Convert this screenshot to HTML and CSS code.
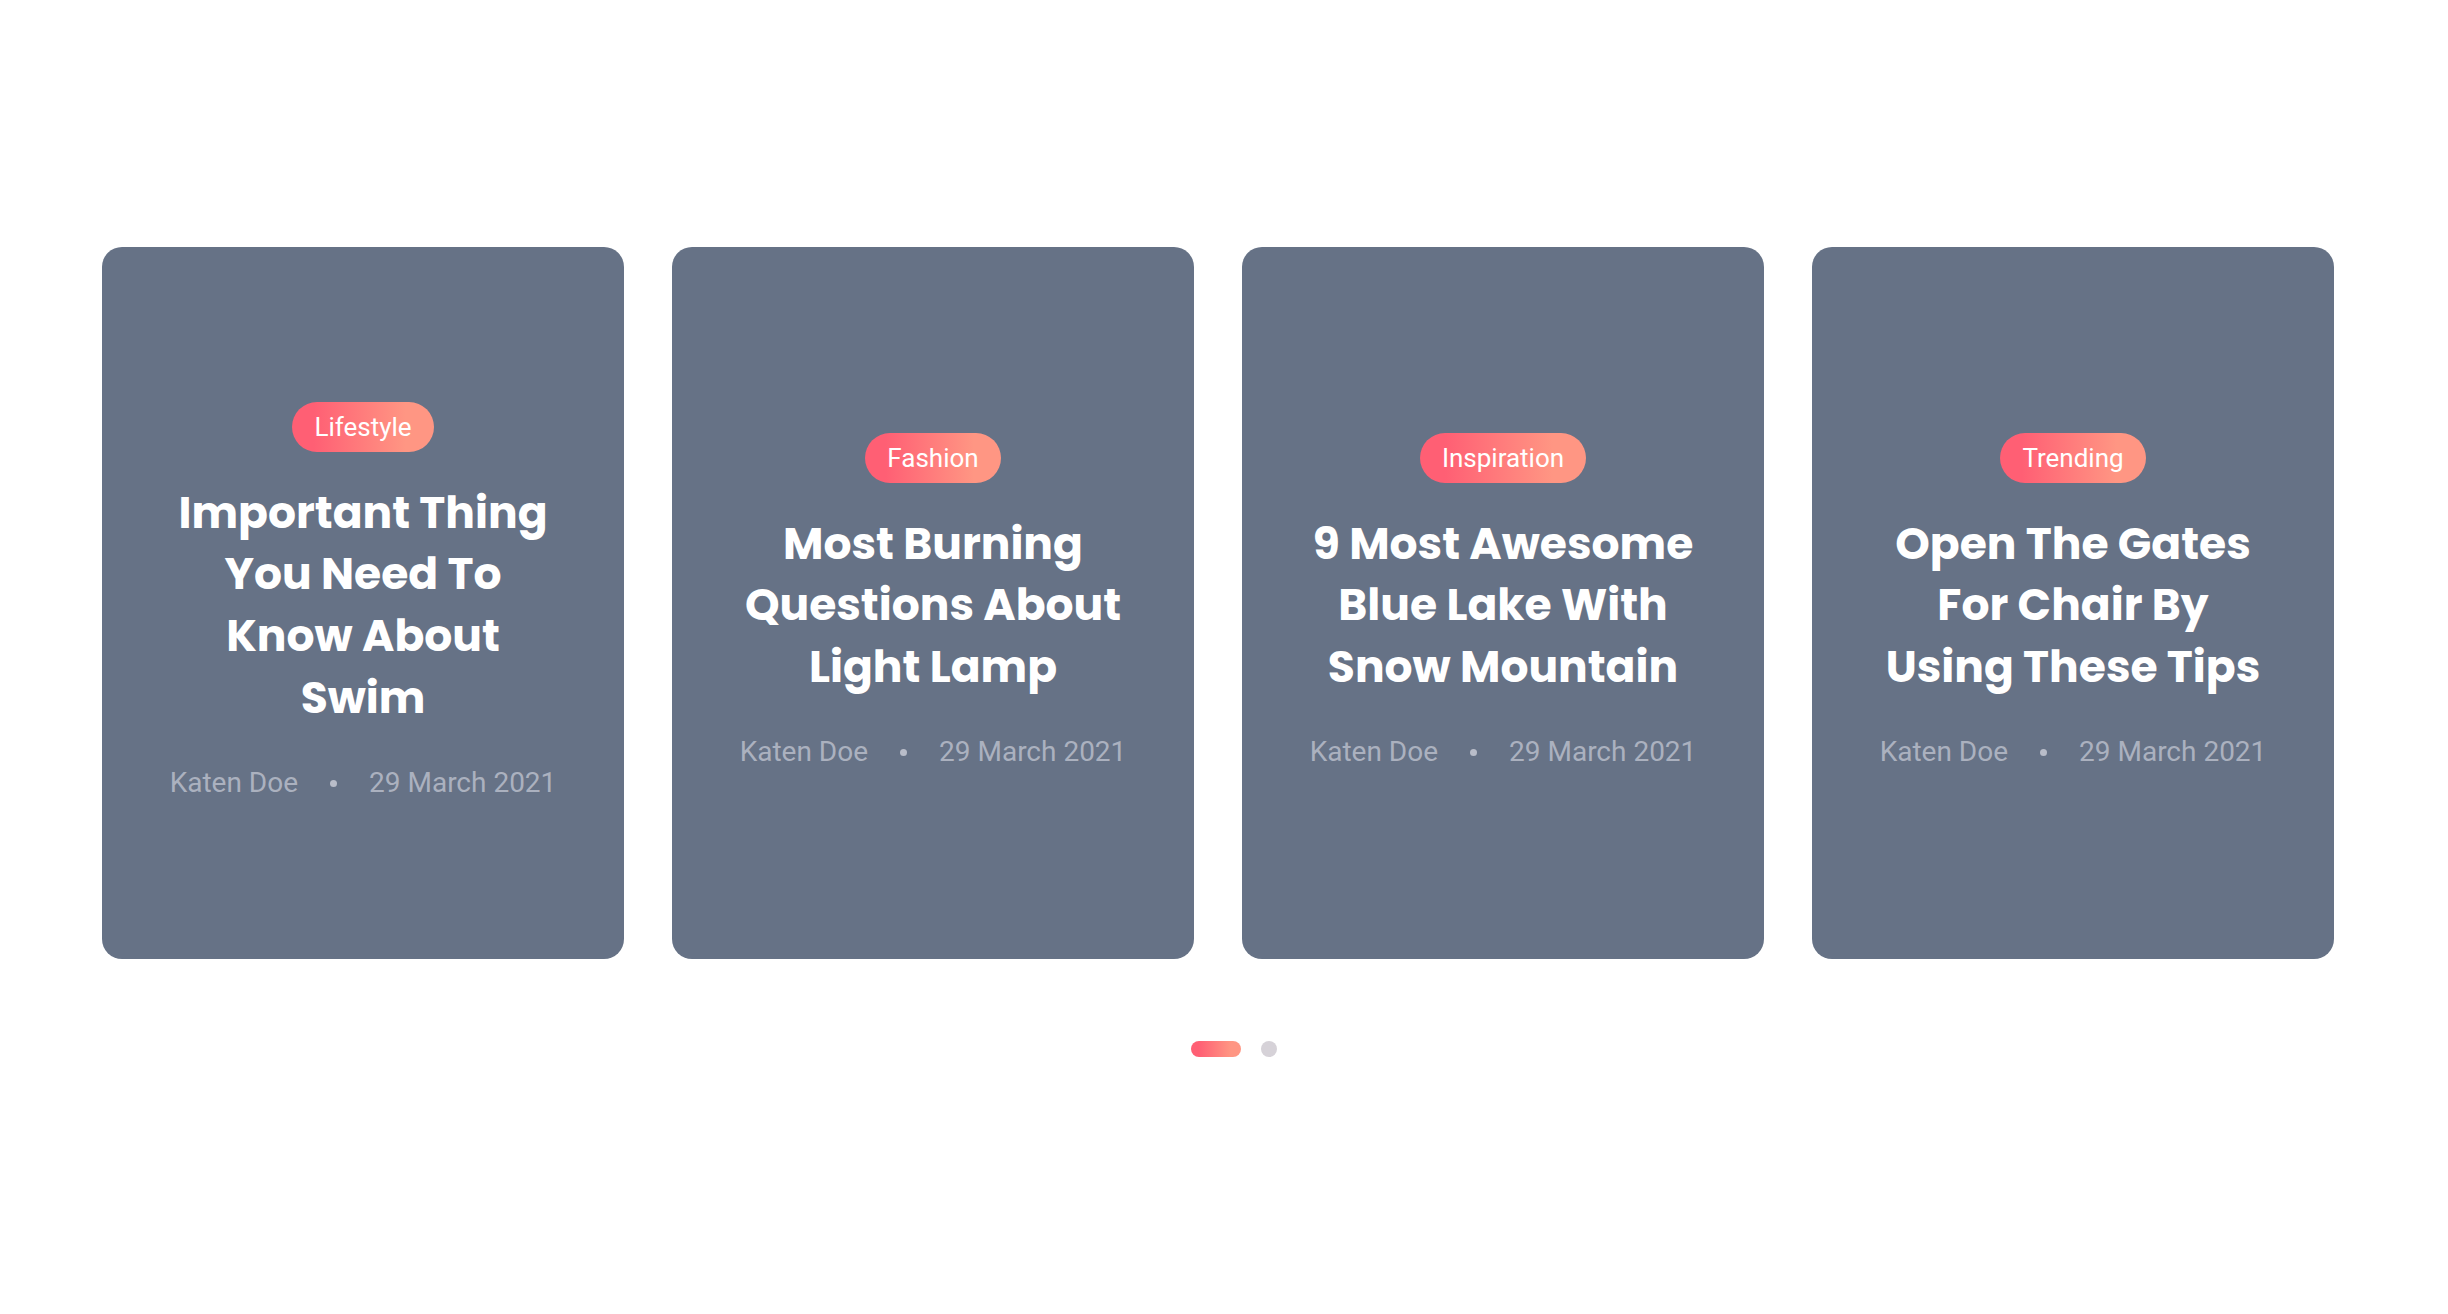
FILE: index.html
```html
<!DOCTYPE html>
<html lang="en">
<head>
<meta charset="utf-8">
<meta name="viewport" content="width=device-width, initial-scale=1">
<title>Featured posts</title>
<link rel="stylesheet" href="styles.css">
</head>
<body>
<main class="carousel">
  <div class="posts">
    <article class="card">
      <a class="tag" href="#lifestyle">Lifestyle</a>
      <h2 class="title"><a href="#swim">Important Thing You Need To Know About Swim</a></h2>
      <ul class="meta"><li><a href="#katen">Katen Doe</a></li><li>29 March 2021</li></ul>
    </article>
    <article class="card">
      <a class="tag" href="#fashion">Fashion</a>
      <h2 class="title"><a href="#lamp">Most Burning Questions About Light Lamp</a></h2>
      <ul class="meta"><li><a href="#katen">Katen Doe</a></li><li>29 March 2021</li></ul>
    </article>
    <article class="card">
      <a class="tag" href="#inspiration">Inspiration</a>
      <h2 class="title"><a href="#lake">9 Most Awesome Blue Lake With Snow Mountain</a></h2>
      <ul class="meta"><li><a href="#katen">Katen Doe</a></li><li>29 March 2021</li></ul>
    </article>
    <article class="card">
      <a class="tag" href="#trending">Trending</a>
      <h2 class="title"><a href="#chair">Open The Gates For Chair By Using These Tips</a></h2>
      <ul class="meta"><li><a href="#katen">Katen Doe</a></li><li>29 March 2021</li></ul>
    </article>
  </div>
  <nav class="dots" aria-label="Slides">
    <button class="dot dot-active" type="button" aria-label="Slide 1" aria-current="true"></button>
    <button class="dot" type="button" aria-label="Slide 2"></button>
  </nav>
</main>
</body>
</html>
```
FILE: styles.css
```css
* {
  box-sizing: border-box;
}

body {
  margin: 0;
  background: #fff;
  font-family: Roboto, sans-serif;
}

a {
  color: inherit;
  text-decoration: none;
}

.carousel {
  padding: 247px 114px 120px 102px;
}

.posts {
  display: grid;
  grid-template-columns: repeat(4, minmax(0, 1fr));
  gap: 48px;
}

.card {
  display: flex;
  flex-direction: column;
  align-items: center;
  justify-content: center;
  gap: 30px;
  min-height: 712px;
  padding: 60px;
  border-radius: 20px;
  background: #667286;
  color: #fff;
  text-align: center;
}

.tag {
  padding: 0 22px;
  border-radius: 25px;
  background: linear-gradient(to right, #ff5f74 15%, #ff9683 80%);
  font-size: 26px;
  line-height: 50px;
}

.title {
  margin: 0;
  font-family: Poppins, Inter, sans-serif;
  font-size: 44px;
  font-weight: 700;
  line-height: 1.4;
}

.meta {
  display: flex;
  align-items: center;
  margin: 0;
  padding: 4px 0 0;
  color: #abb1bf;
  font-size: 28px;
  line-height: 42px;
  list-style: none;
  white-space: nowrap;
}

.meta li {
  display: flex;
  align-items: center;
}

.meta li + li::before {
  content: "";
  width: 7px;
  height: 7px;
  margin: 0 32px;
  border-radius: 50%;
  background: #b9bdc9;
}

.dots {
  display: flex;
  justify-content: center;
  gap: 20px;
  margin-top: 82px;
  padding-left: 32px;
}

.dot {
  width: 16px;
  height: 16px;
  padding: 0;
  border: 0;
  border-radius: 8px;
  background: #d6d2d8;
  cursor: pointer;
}

.dot-active {
  width: 50px;
  background: linear-gradient(to right, #ff5f74 15%, #ff9683 80%);
}
```
